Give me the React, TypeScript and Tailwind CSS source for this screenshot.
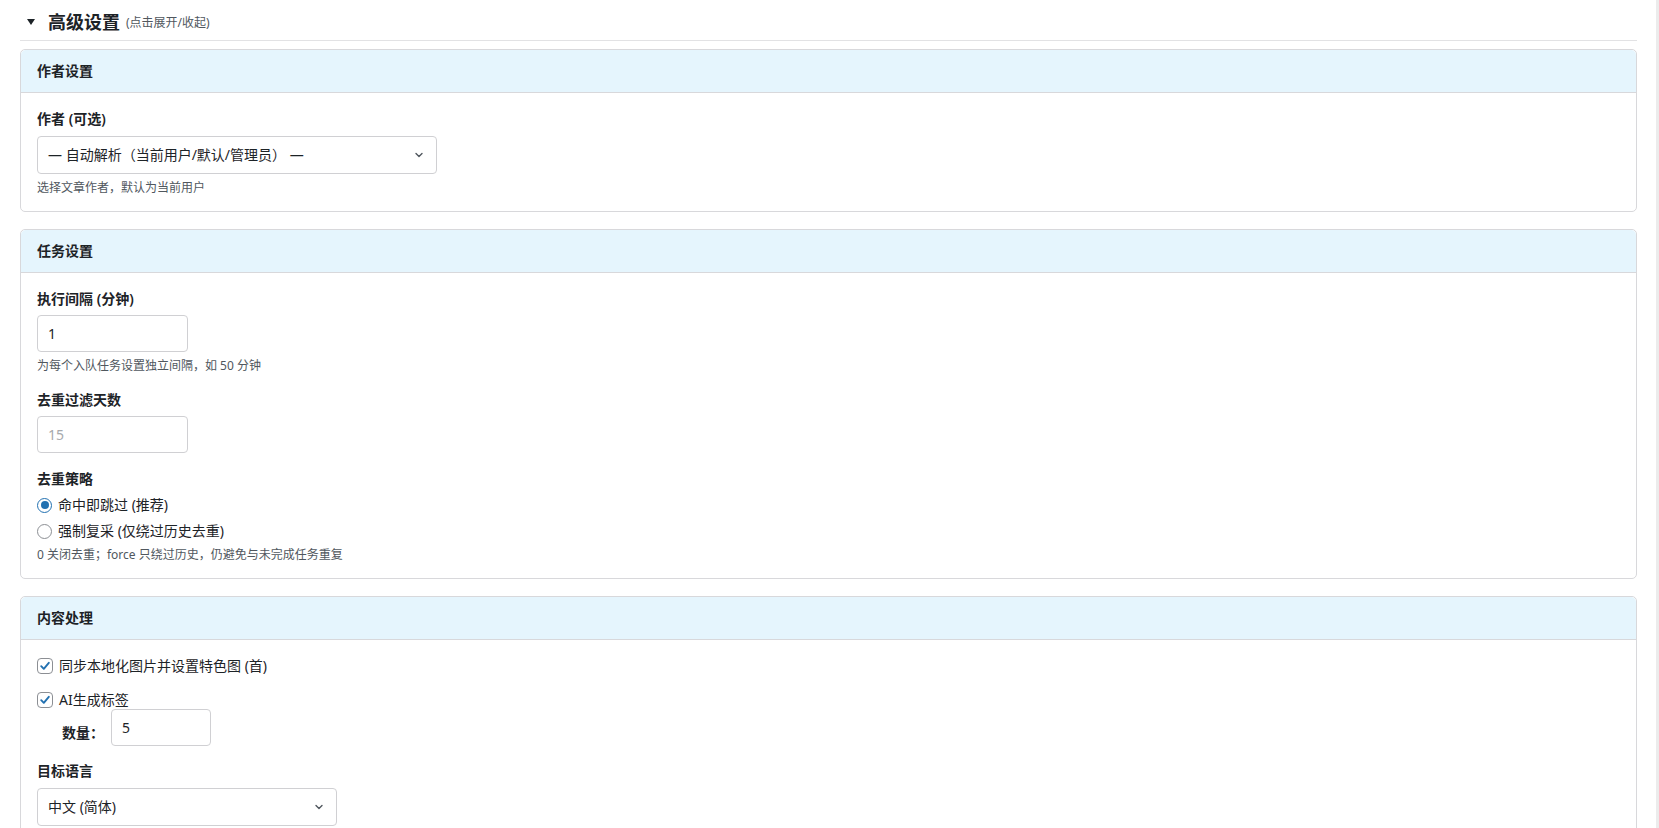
import React from "react";

const font = { fontFamily: '"Noto Sans", "Noto Sans CJK SC", sans-serif' };

function Chevron() {
  return (
    <svg width="10" height="10" viewBox="0 0 10 10" className="shrink-0">
      <path d="M2 3.5 L5 6.5 L8 3.5" fill="none" stroke="#50575e" strokeWidth="1.4" strokeLinecap="round" strokeLinejoin="round" />
    </svg>
  );
}

function Select({ text, width }: { text: string; width: string }) {
  return (
    <div className={`flex h-[38px] ${width} items-center justify-between rounded-[4px] border border-[#d0d0d3] bg-white pl-[10px] pr-[12px] text-[14px] text-[#1d2327]`}>
      <span className="leading-[20px]">{text}</span>
      <Chevron />
    </div>
  );
}

function Card({ title, children }: { title: string; children: React.ReactNode }) {
  return (
    <div className="rounded-[5px] border border-[#d8d8db] bg-white">
      <div className="flex h-[43px] items-center rounded-t-[5px] border-b border-[#d8d8db] bg-[#e5f5fd] px-4">
        <span className="text-[14px] font-bold leading-[20px] text-[#1d2327]">{title}</span>
      </div>
      <div className="px-4 pb-[14px] pt-[16px]">{children}</div>
    </div>
  );
}

function Label({ children }: { children: React.ReactNode }) {
  return <div className="text-[14px] font-semibold leading-[20px] text-[#1d2327]">{children}</div>;
}

function Help({ children }: { children: React.ReactNode }) {
  return <div className="mt-[5px] text-[12px] leading-[18px] text-[#50575e]">{children}</div>;
}

function NumberBox({ value, placeholder, width }: { value?: string; placeholder?: string; width: string }) {
  return (
    <div className={`flex h-[37px] ${width} items-center rounded-[4px] border border-[#d0d0d3] bg-white px-[10px] text-[14px] leading-[20px]`}>
      {value ? <span className="text-[#1d2327]">{value}</span> : <span className="text-[#a7aaad]">{placeholder}</span>}
    </div>
  );
}

function Radio({ checked, label }: { checked?: boolean; label: string }) {
  return (
    <div className="flex h-[26px] items-center gap-[6px]">
      <div className={`flex h-[15px] w-[15px] items-center justify-center rounded-full border ${checked ? "border-[#2271b1]" : "border-[#8c8f94]"} bg-white`}>
        {checked && <div className="h-[8px] w-[8px] rounded-full bg-[#2271b1]" />}
      </div>
      <span className="text-[14px] leading-[20px] text-[#1d2327]">{label}</span>
    </div>
  );
}

function Checkbox({ label }: { label: string }) {
  return (
    <div className="flex items-center gap-[6px]">
      <div className="flex h-[16px] w-[16px] items-center justify-center rounded-[4px] border border-[#8c8f94] bg-white">
        <svg width="12" height="12" viewBox="0 0 12 12">
          <path d="M2.2 6.2 L4.8 8.8 L9.8 2.8" fill="none" stroke="#2271b1" strokeWidth="1.9" strokeLinecap="round" strokeLinejoin="round" />
        </svg>
      </div>
      <span className="text-[14px] leading-[20px] text-[#1d2327]">{label}</span>
    </div>
  );
}

export default function App() {
  return (
    <div className="flex h-[828px] w-full overflow-hidden bg-white" style={font}>
      <div className="min-w-0 flex-1 pl-[20px] pr-[19px]">
        <div className="flex h-[41px] items-center border-b border-[#e2e2e4] pt-[4px]">
          <svg width="10" height="8" viewBox="0 0 10 8" className="ml-[6px] mr-[12px]">
            <polygon points="1,1 9,1 5,7" fill="#1d2327" />
          </svg>
          <span className="text-[18px] font-bold leading-[24px] text-[#1d2327]">高级设置</span>
          <span className="ml-[6px] mt-[2px] text-[12px] leading-[16px] text-[#50575e]">(点击展开/收起)</span>
        </div>

        <div className="mt-[8px] flex flex-col gap-[17px]">
          <Card title="作者设置">
            <Label>作者 (可选)</Label>
            <div className="mt-[7px]">
              <Select text="— 自动解析（当前用户/默认/管理员） —" width="w-[400px]" />
            </div>
            <Help>选择文章作者，默认为当前用户</Help>
          </Card>

          <Card title="任务设置">
            <div>
              <Label>执行间隔 (分钟)</Label>
              <div className="mt-[6px]">
                <NumberBox value="1" width="w-[151px]" />
              </div>
              <Help>为每个入队任务设置独立间隔，如 50 分钟</Help>
            </div>
            <div className="mt-[15px]">
              <Label>去重过滤天数</Label>
              <div className="mt-[6px]">
                <NumberBox placeholder="15" width="w-[151px]" />
              </div>
            </div>
            <div className="mt-[16px]">
              <Label>去重策略</Label>
              <div className="mt-[3px]">
                <Radio checked label="命中即跳过 (推荐)" />
                <Radio label="强制复采 (仅绕过历史去重)" />
              </div>
              <div className="mt-[2px] text-[12px] leading-[18px] text-[#50575e]">0 关闭去重；force 只绕过历史，仍避免与未完成任务重复</div>
            </div>
          </Card>

          <Card title="内容处理">
            <div className="-mt-[2px] flex h-[24px] items-center">
              <Checkbox label="同步本地化图片并设置特色图 (首)" />
            </div>
            <div className="mt-[10px] flex h-[24px] items-center">
              <Checkbox label="AI生成标签" />
            </div>
            <div className="flex items-center pl-[25px]">
              <span className="w-[49px] pt-[8px] text-[14px] font-semibold leading-[20px] text-[#1d2327]">数量：</span>
              <div className="-mt-[3px]">
                <NumberBox value="5" width="w-[100px]" />
              </div>
            </div>
            <div className="mt-[15px]">
              <Label>目标语言</Label>
              <div className="mt-[7px]">
                <Select text="中文 (简体)" width="w-[300px]" />
              </div>
            </div>
          </Card>
        </div>
      </div>
      <div className="w-[3px] shrink-0 bg-[#ececec]" />
    </div>
  );
}
